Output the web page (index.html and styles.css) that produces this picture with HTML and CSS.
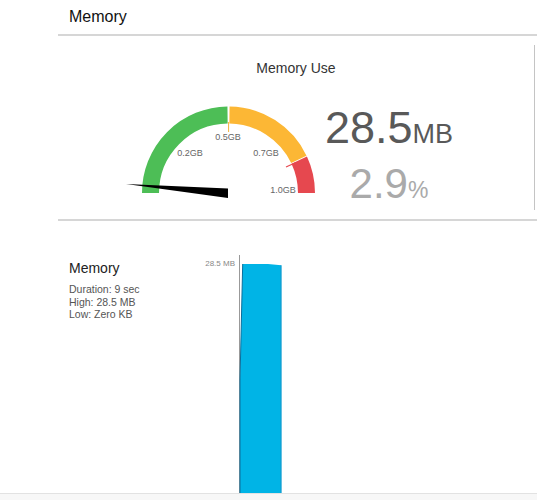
FILE: index.html
```html
<!DOCTYPE html>
<html lang="en">
<head>
    <meta charset="UTF-8">
    <title>Memory</title>
    <link rel="stylesheet" href="styles.css">
</head>
<body>
    <div class="panel-header">Memory</div>

    <div class="gauge-section">
        <div class="gauge-card">
            <h3 class="gauge-title">Memory Use</h3>
            <div class="gauge-row">
                <svg class="gauge" width="200" height="100" viewBox="0 0 200 100">
                    <path d="M30.5 93 A78 78 0 0 1 107.55 15" class="arc arc-green"/>
                    <path d="M109.45 15 A78 78 0 0 1 178.84 59.3" class="arc arc-yellow"/>
                    <path d="M179.25 60.16 A78 78 0 0 1 186.5 93" class="arc arc-red"/>
                    <line x1="108.6" y1="22" x2="108.6" y2="32" class="tick tick-yellow"/>
                    <line x1="166" y1="67" x2="176" y2="62.5" class="tick tick-red"/>
                    <text x="108" y="39.5" class="gauge-label">0.5GB</text>
                    <text x="70" y="55.5" class="gauge-label">0.2GB</text>
                    <text x="146" y="55.5" class="gauge-label">0.7GB</text>
                    <text x="163" y="92.5" class="gauge-label">1.0GB</text>
                    <polygon points="6,84 108,88.5 108,98" class="needle"/>
                </svg>
                <div class="readout">
                    <div class="readout-main">28.5<span class="unit">MB</span></div>
                    <div class="readout-pct">2.9<span class="unit-pct">%</span></div>
                </div>
            </div>
        </div>
    </div>

    <div class="detail-section">
        <div class="detail-info">
            <h4 class="detail-title">Memory</h4>
            <p class="detail-stats">Duration: 9 sec<br>High: 28.5 MB<br>Low: Zero KB</p>
        </div>
        <div class="chart">
            <div class="chart-axis">28.5 MB</div>
            <div class="chart-plot">
                <svg width="60" height="238" viewBox="0 0 60 238">
                    <polygon points="2.7,9 28,9 41.3,10.3 41.3,238 0,238 0,125" class="bar"/>
                    <polyline points="2.7,9 0,125 0,238" class="bar-edge"/>
                    <line x1="41" y1="10.3" x2="41" y2="238" class="bar-edge-right"/>
                </svg>
            </div>
        </div>
    </div>

    <div class="footer"></div>
</body>
</html>
```

FILE: styles.css
```css
body {
    margin: 0;
    font-family: "Liberation Sans", Arial, sans-serif;
    background-color: #fff;
}

.panel-header {
    margin-left: 58px;
    padding-left: 11px;
    height: 34px;
    line-height: 34px;
    font-size: 16px;
    color: #111;
    border-bottom: 2px solid #d6d6d6;
}

.gauge-section {
    margin-left: 58px;
    padding: 9px 2px 9px 0;
    border-bottom: 2px solid #d6d6d6;
}

.gauge-card {
    height: 165px;
    box-sizing: border-box;
    padding-top: 15px;
    border-right: 1px solid #c4c4c4;
}

.gauge-title {
    margin: 0;
    font-size: 14px;
    line-height: 16px;
    font-weight: normal;
    color: #333;
    text-align: center;
}

.gauge-row {
    display: flex;
    margin-top: 24px;
    padding-left: 62px;
}

.gauge {
    display: block;
}

.arc {
    fill: none;
    stroke-width: 17;
}

.arc-green {
    stroke: #4dbe56;
}

.arc-yellow {
    stroke: #fcb735;
}

.arc-red {
    stroke: #e6484f;
}

.tick {
    stroke-width: 1;
}

.tick-yellow {
    stroke: #f3b23a;
}

.tick-red {
    stroke: #e6484f;
    stroke-width: 1.2;
}

.gauge-label {
    font-family: "Liberation Sans", Arial, sans-serif;
    font-size: 9px;
    fill: #666;
    text-anchor: middle;
}

.needle {
    fill: #000;
}

.readout {
    width: 138px;
    padding-top: 5px;
    text-align: center;
}

.readout-main {
    font-size: 45px;
    line-height: 45px;
    color: #595959;
}

.unit {
    font-size: 27px;
}

.readout-pct {
    margin-top: 6px;
    font-size: 42px;
    line-height: 42px;
    color: #aaa;
}

.unit-pct {
    font-size: 23px;
}

.detail-section {
    display: flex;
    height: 272px;
    box-sizing: border-box;
    padding: 34px 0 0 69px;
}

.detail-info {
    width: 130px;
    padding-top: 5px;
}

.detail-title {
    margin: 0;
    font-size: 14px;
    line-height: 16px;
    font-weight: normal;
    color: #222;
}

.detail-stats {
    margin: 7px 0 0;
    font-size: 10.5px;
    line-height: 12.7px;
    color: #555;
}

.chart {
    display: flex;
    height: 238px;
}

.chart-axis {
    width: 36px;
    margin-right: 4px;
    padding-top: 4px;
    font-size: 8px;
    line-height: 10px;
    color: #888;
    text-align: right;
}

.chart-plot {
    border-left: 1px solid #999;
}

.chart-plot svg {
    display: block;
    overflow: visible;
}

.bar {
    fill: #00b4e6;
}

.bar-edge {
    fill: none;
    stroke: #0a6e9c;
    stroke-width: 1;
}

.bar-edge-right {
    stroke: #1796c9;
    stroke-width: 1;
}

.footer {
    height: 6px;
    background-color: #f7f7f7;
    border-top: 1px solid #e2e2e2;
}
```
